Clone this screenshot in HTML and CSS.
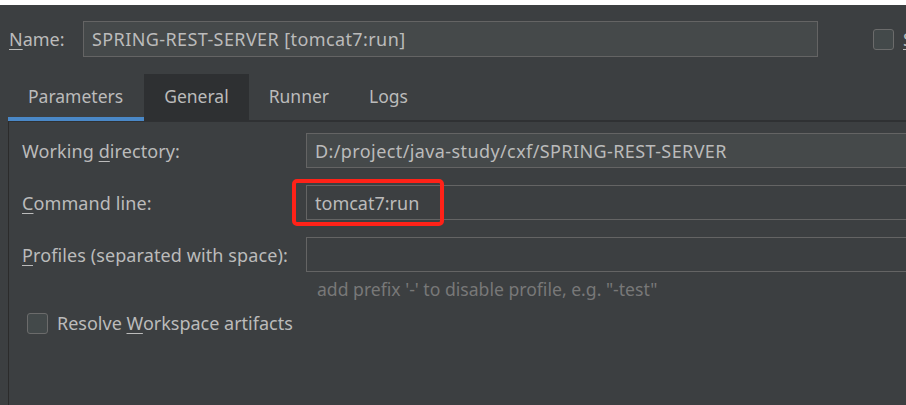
FILE: index.html
```html
<!DOCTYPE html>
<html>
<head>
<meta charset="utf-8">
<link rel="stylesheet" href="styles.css">
</head>
<body>
<div class="topstrip"></div>
<div class="dialog">
  <div class="name-row">
    <label class="name-label"><u>N</u>ame:</label>
    <div class="field light name-field">SPRING-REST-SERVER [tomcat7:run]</div>
    <div class="share">
      <span class="checkbox"></span>
      <span class="share-label"><u>S</u>hare</span>
    </div>
  </div>
  <div class="tabs">
    <div class="tab active">Parameters</div>
    <div class="tab selected">General</div>
    <div class="tab">Runner</div>
    <div class="tab">Logs</div>
  </div>
  <div class="panel">
    <div class="form">
      <div class="label">Working <u>d</u>irectory:</div>
      <div class="field light">D:/project/java-study/cxf/SPRING-REST-SERVER</div>
      <div class="label"><u>C</u>ommand line:</div>
      <div class="field-wrap">
        <div class="field">tomcat7:run</div>
        <span class="highlight"></span>
      </div>
      <div class="label"><u>P</u>rofiles (separated with space):</div>
      <div class="field"></div>
      <div></div>
      <div class="hint">add prefix '-' to disable profile, e.g. "-test"</div>
    </div>
    <div class="check-row">
      <span class="checkbox"></span>
      <span class="check-label">Resolve <u>W</u>orkspace artifacts</span>
    </div>
  </div>
</div>
</body>
</html>
```

FILE: styles.css
```css
html, body {
  margin: 0;
  padding: 0;
  overflow: hidden;
  background: #3c3f41;
}
body {
  width: 906px;
  height: 405px;
  font-family: "Noto Sans", "Open Sans", sans-serif;
  font-size: 18px;
  color: #bbbbbb;
}
u {
  text-decoration: underline;
  text-underline-offset: 3px;
}
.topstrip {
  height: 5px;
  background: #ffffff;
}
.dialog {
  width: 1000px;
  height: 400px;
  background: #3c3f41;
}
.name-row {
  display: flex;
  align-items: center;
  height: 36px;
  padding: 16px 0 0 9px;
}
.name-label {
  width: 74px;
}
.field {
  box-sizing: border-box;
  height: 35px;
  border: 1px solid #646464;
  background: #3c3f41;
  padding: 0 8px;
  display: flex;
  align-items: center;
  white-space: nowrap;
}
.field.light {
  background: #45494a;
}
.name-field {
  width: 735px;
  height: 36px;
  letter-spacing: 0.3px;
}
.share {
  display: flex;
  align-items: center;
  margin-left: 55px;
  gap: 9px;
}
.checkbox {
  box-sizing: border-box;
  width: 21px;
  height: 21px;
  border: 1px solid #6b6b6b;
  border-radius: 3px;
  background: #43494a;
  flex: none;
}
.tabs {
  display: flex;
  height: 47px;
  margin-top: 17px;
  padding-left: 8px;
  font-size: 17.5px;
}
.tab {
  display: flex;
  align-items: center;
  padding: 0 20px;
  box-sizing: border-box;
  height: 47px;
  padding-bottom: 4px;
}
.tab.active {
  border-bottom: 4px solid #4a88c7;
  padding-bottom: 0;
  padding-right: 21px;
}
.tab.selected {
  background: #2e3032;
}
.panel {
  margin-left: 8px;
  border-top: 2px solid #2f3133;
  border-left: 1px solid #2b2b2b;
  margin-top: -1px;
  height: 300px;
  padding: 11px 0 0 13px;
}
.form {
  display: grid;
  grid-template-columns: 284px 1fr;
  row-gap: 17px;
  align-items: center;
}
.light {
  letter-spacing: 0.4px;
}
.label {
  letter-spacing: 0.1px;
}
.field-wrap {
  position: relative;
}
.highlight {
  position: absolute;
  left: -14px;
  top: -6px;
  width: 152px;
  height: 47px;
  box-sizing: border-box;
  border: 4px solid #ff2218;
  border-radius: 5px;
}
.hint {
  color: #787878;
  padding-left: 11px;
  margin-top: -17px;
  height: 34px;
  display: flex;
  align-items: center;
  font-size: 17.6px;
}
.check-row {
  display: flex;
  align-items: center;
  gap: 9px;
  margin-top: 5px;
  padding-left: 5px;
}
```
